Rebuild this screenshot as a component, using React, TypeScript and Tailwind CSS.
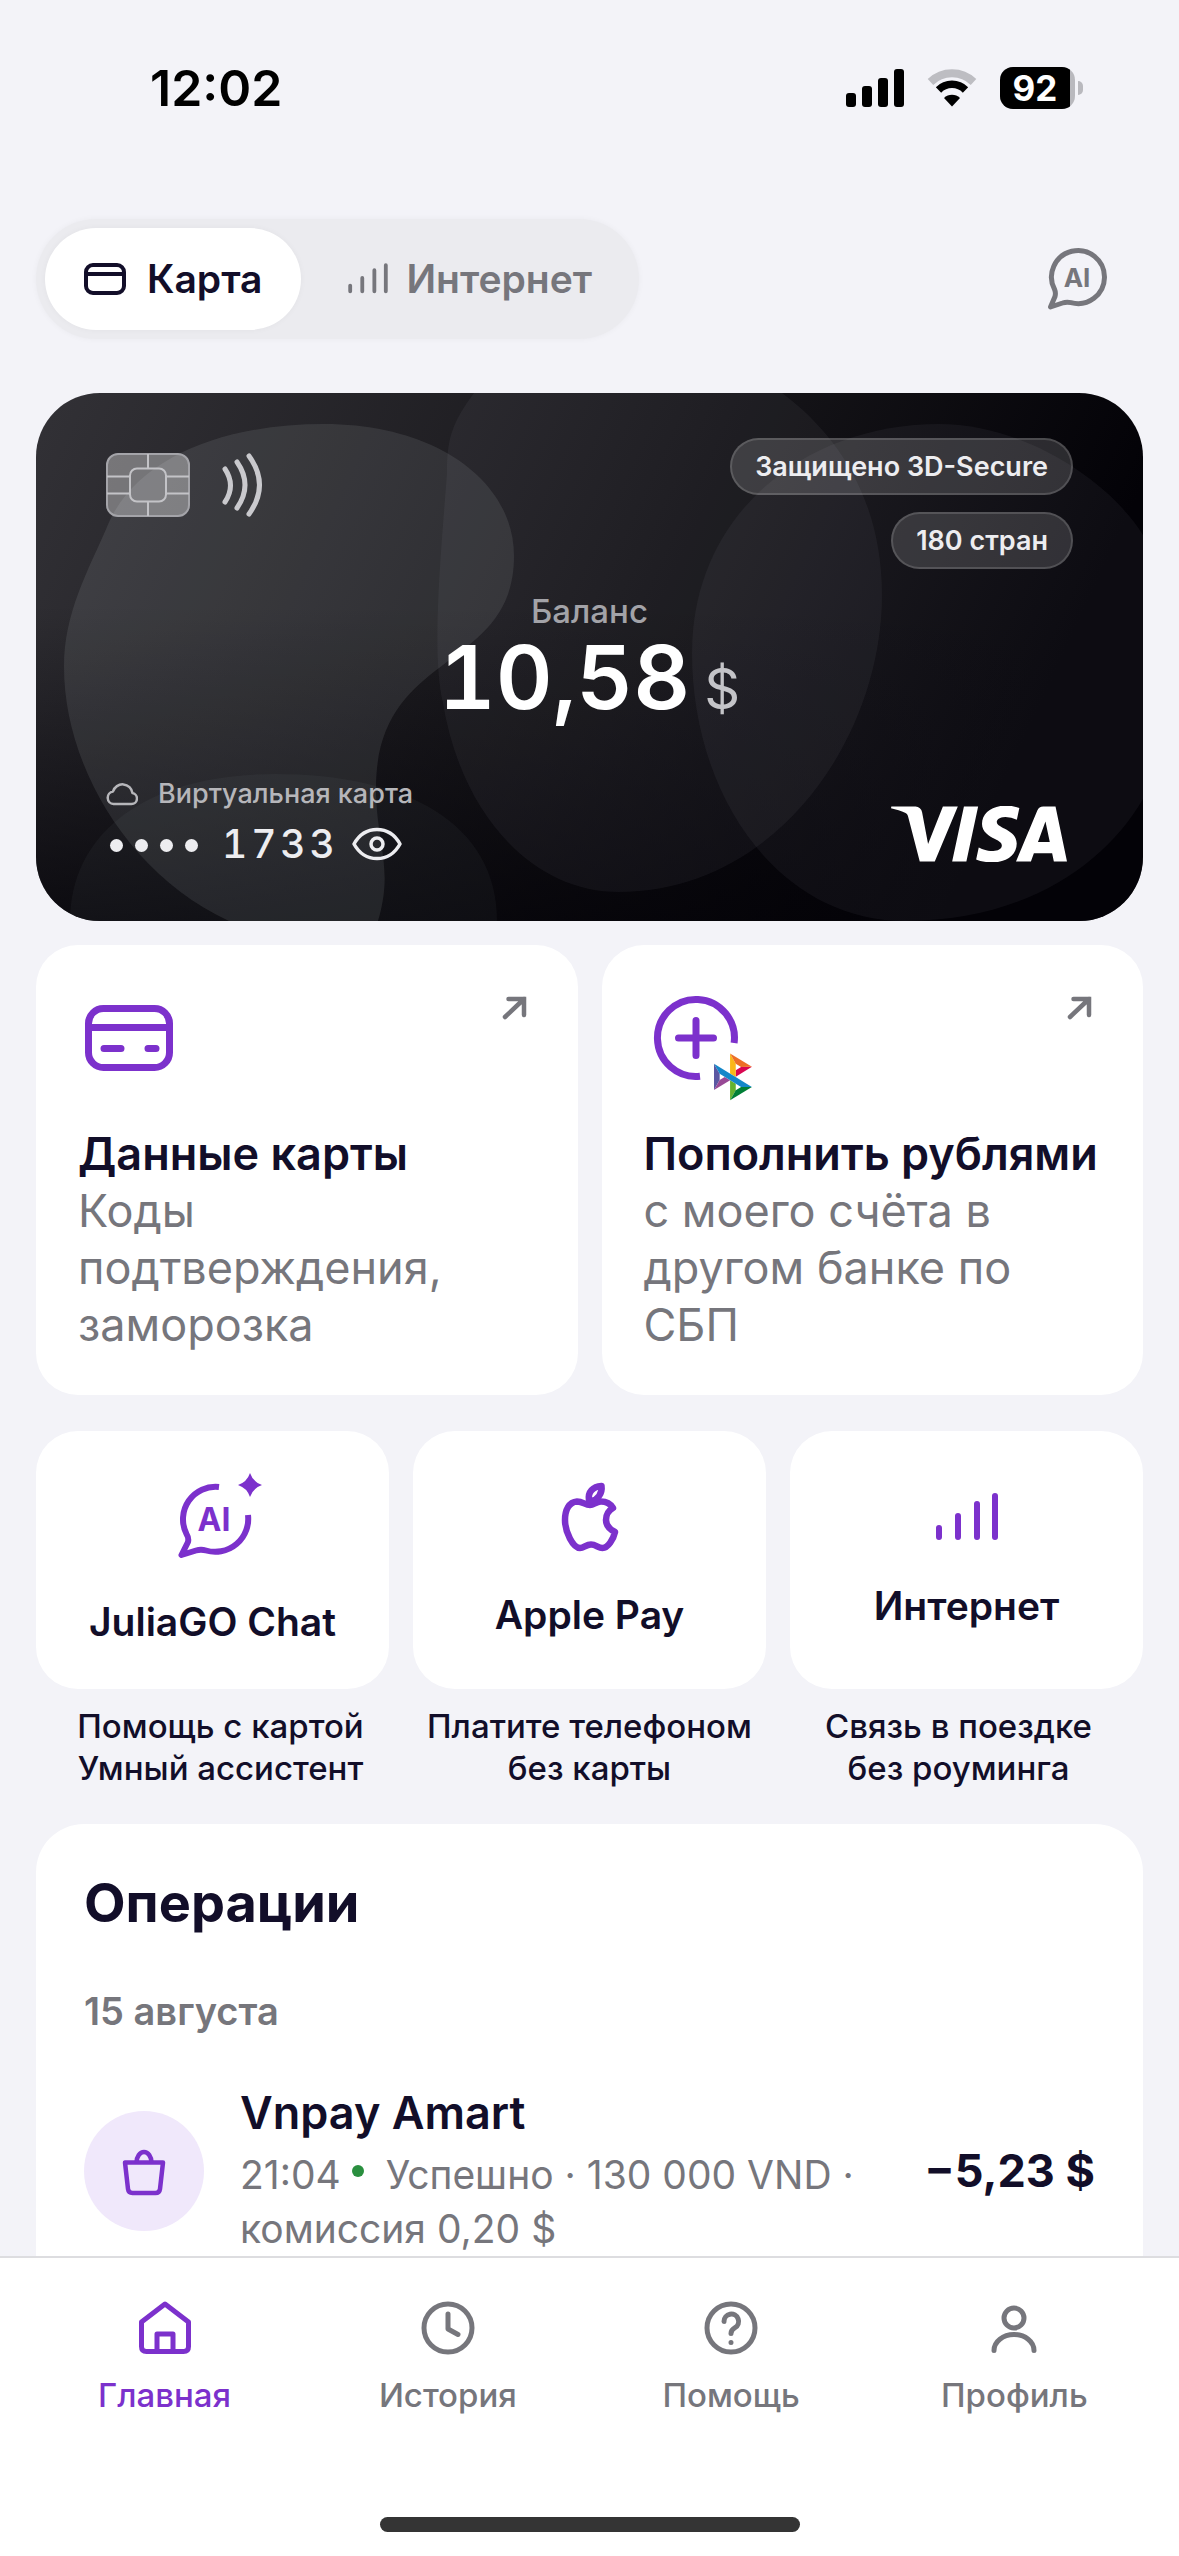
import { useState, type ReactNode } from "react";
import { SiVisa } from "react-icons/si";

function StatusBar() {
  return (
    <header className="flex h-[219px] items-start justify-between pt-[58px] pr-[96px] pl-[150px] text-black">
      <time className="text-[50px] leading-[60px] font-semibold">12:02</time>
      <div className="flex h-[60px] items-center gap-[23px]">
        <svg width="58" height="38" viewBox="0 0 58 38" fill="currentColor" aria-hidden="true">
          <rect x="0" y="24" width="10" height="14" rx="3" />
          <rect x="16" y="17" width="10" height="21" rx="3" />
          <rect x="32" y="9" width="10" height="29" rx="3" />
          <rect x="48" y="0" width="10" height="38" rx="3" />
        </svg>
        <svg width="50" height="38" viewBox="0 0 50 38" fill="none" aria-hidden="true">
          <path d="M3.5 13a31 31 0 0 1 43 0" stroke="#bdbdc2" strokeWidth="8" />
          <path d="M11.5 21a19 19 0 0 1 27 0" stroke="currentColor" strokeWidth="7.5" />
          <path d="M25 37.500l-8-8.500a11.500 11.500 0 0 1 16 0z" fill="currentColor" />
        </svg>
        <div className="flex items-center gap-[3px]">
          <div className="h-[42px] w-[75px] overflow-hidden rounded-[13px] bg-[#b9b9be]">
            <div className="flex h-full w-[70px] items-center justify-center bg-black text-[35px] leading-none font-bold text-white">
              92
            </div>
          </div>
          <div className="h-[14px] w-[5px] rounded-r-full bg-[#b9b9be]" />
        </div>
      </div>
    </header>
  );
}

function CardGlyph() {
  return (
    <svg width="44" height="36" viewBox="0 0 44 36" fill="none" stroke="currentColor" strokeWidth="4" aria-hidden="true">
      <rect x="3" y="4" width="38" height="28" rx="7" />
      <path d="M3 13h38" />
    </svg>
  );
}

function Bars({ width, stroke }: { width: number; stroke: number }) {
  return (
    <svg
      width={width}
      viewBox="0 0 66 52"
      fill="none"
      stroke="currentColor"
      strokeWidth={stroke}
      strokeLinecap="round"
      aria-hidden="true"
    >
      <path d="M5 37v9M24 25v21M43 13v33M61 5v41" />
    </svg>
  );
}

function TopTabs() {
  const [tab, setTab] = useState<"card" | "net">("card");
  const base = "flex h-[102px] items-center rounded-full px-[38px] text-[39px] font-semibold";
  const on = `${base} bg-white text-[#120e29] shadow-[0_0_6px_rgba(0,0,0,0.04)]`;
  const off = `${base} text-[#76767c]`;

  return (
    <div className="flex items-center justify-between px-[36px]">
      <div className="flex gap-[8px] rounded-full bg-[#ebebef] p-[9px] shadow-[0_0_6px_rgba(0,0,0,0.04)]">
        <button className={`${tab === "card" ? on : off} gap-[20px]`} onClick={() => setTab("card")}>
          <CardGlyph />
          Карта
        </button>
        <button className={`${tab === "net" ? on : off} gap-[18px]`} onClick={() => setTab("net")}>
          <Bars width={42} stroke={6} />
          Интернет
        </button>
      </div>
      <button className="mr-[32px] text-[#76767c]" aria-label="AI чат">
        <svg width="66" height="66" viewBox="0 0 66 66" fill="none" aria-hidden="true">
          <path
            d="M9.600 43.500A26.500 26.500 0 1 1 26 56.600Q21.500 55.500 17.500 57L5.500 61L10 50.500Q11 47 9.600 43.500Z"
            stroke="currentColor"
            strokeWidth="5"
            strokeLinejoin="round"
          />
          <text x="32" y="41" textAnchor="middle" fontSize="26" fontWeight="700" fill="currentColor">
            AI
          </text>
        </svg>
      </button>
    </div>
  );
}

function CardBackdrop() {
  return (
    <svg
      className="absolute inset-0 h-full w-full"
      viewBox="0 0 1107 528"
      preserveAspectRatio="none"
      fill="#d4e0e6"
      aria-hidden="true"
    >
      <defs>
        <linearGradient id="shade" x1="0" y1="0" x2="0" y2="1">
          <stop offset="0.4" stopColor="#030207" stopOpacity="0" />
          <stop offset="1" stopColor="#030207" stopOpacity="0.75" />
        </linearGradient>
      </defs>
      <rect width="1107" height="528" fill="url(#shade)" />
      <path
        fillOpacity="0.1"
        d="M28 274C28 220 52 178 71 134C98 66 186 31 288 31C400 31 478 88 478 163C478 280 340 255 340 395C340 450 358 475 342 528H193C90 480 28 370 28 274Z"
      />
      <path
        fillOpacity="0.05"
        d="M438 0C416 30 411 45 411 80C405 160 395 260 407 310C425 420 495 499 583 499C740 499 846 345 846 202C846 105 800 40 746 0Z"
      />
      <path
        fillOpacity="0.05"
        d="M656 260C656 120 770 31 903 31C990 31 1075 90 1107 142V406C1070 470 990 528 870 528C740 528 656 400 656 260Z"
      />
      <path fillOpacity="0.04" d="M34 528C34 440 110 381 239 381C370 381 461 430 461 528Z" />
    </svg>
  );
}

function Chip() {
  return (
    <svg width="84" height="64" viewBox="0 0 84 64" fill="none" stroke="#c3c3c7" strokeWidth="2" aria-hidden="true">
      <rect x="1" y="1" width="82" height="62" rx="11" fill="#ffffff" fillOpacity="0.35" stroke="#a4a4a9" />
      <path d="M42 1v15M42 48v15M1 23.500h23M60 23.500h23M1 40.500h23M60 40.500h23" />
      <rect x="24" y="15.500" width="36" height="33" rx="7" />
    </svg>
  );
}

function BankCard() {
  const [visible, setVisible] = useState(true);
  const pill =
    "rounded-full border-2 border-white/15 bg-white/15 px-[23px] text-[27px] leading-[53px] font-semibold text-[#ededf0]";

  return (
    <section className="relative mx-[36px] mt-[54px] overflow-hidden rounded-[64px] bg-linear-[115deg] from-[#323136] via-[#17161a] via-50% to-[#030207] to-85% px-[70px] pt-[45px] pb-[54px]">
      <CardBackdrop />
      <div className="relative flex items-start justify-between">
        <div className="flex items-center gap-[31px] pt-[14px]">
          <Chip />
          <svg width="42" height="66" viewBox="0 0 42 66" fill="none" stroke="#c9c9cd" strokeWidth="5" strokeLinecap="round" aria-hidden="true">
            <path d="M4 17q11 16.500 0 33M16 10q16 23 0 46M28 4q21 29 0 58" />
          </svg>
        </div>
        <div className="flex flex-col items-end gap-[17px]">
          <span className={pill}>Защищено 3D-Secure</span>
          <span className={pill}>180 стран</span>
        </div>
      </div>
      <div className="relative mt-[22px] flex flex-col items-center">
        <p className="text-[33px] leading-[40px] font-medium text-[#a3a3a8]">Баланс</p>
        <p className="flex items-baseline gap-[14px] leading-[92px] text-white tabular-nums">
          <span className="text-[88px] font-semibold">10,58</span>
          <span className="text-[56px] text-[#c4c4c8]">$</span>
        </p>
      </div>
      <div className="relative mt-[42px] flex items-end justify-between">
        <div>
          <p className="flex items-center gap-[20px] text-[27px] leading-[34px] font-medium text-[#b6b6ba]">
            <svg width="32" height="24" viewBox="0 0 32 24" fill="none" stroke="currentColor" strokeWidth="2.500" aria-hidden="true">
              <path d="M7.500 22h18a5.500 5.500 0 0 0 1-10.900A10 10 0 0 0 7 9.500A6.300 6.300 0 0 0 7.500 22z" strokeLinejoin="round" />
            </svg>
            Виртуальная карта
          </p>
          <div className="mt-[10px] flex items-center text-[#ededf0]">
            <span className="flex gap-[12px] px-[4px] pt-[3px]" aria-hidden="true">
              {[0, 1, 2, 3].map((i) => (
                <span key={i} className="size-[13px] rounded-full bg-[#ededf0]" />
              ))}
            </span>
            <span className="ml-[20px] text-[39px] leading-[46px] font-medium tracking-widest tabular-nums">
              {visible ? "1733" : "••••"}
            </span>
            <button className="ml-[12px]" aria-label="Показать номер" onClick={() => setVisible(!visible)}>
              <svg width="52" height="36" viewBox="0 0 52 36" fill="none" stroke="currentColor" strokeWidth="3.500" aria-hidden="true">
                <path d="M3 18C8 9 16 3.500 26 3.500S44 9 49 18C44 27 36 32.500 26 32.500S8 27 3 18z" strokeLinejoin="round" />
                <circle cx="26" cy="18" r="6" />
              </svg>
            </button>
          </div>
        </div>
        <SiVisa width="176" height="56" viewBox="0 8.200 24 7.600" className="mr-[6px] mb-[5px] h-[56px] w-[176px] text-white" title="VISA" />
      </div>
    </section>
  );
}

function ArrowUpRight() {
  return (
    <svg width="42" height="42" viewBox="0 0 42 42" fill="none" stroke="#76767c" strokeWidth="4.500" strokeLinecap="round" aria-hidden="true">
      <path d="M11 30L30 12M14.500 12H30v16" />
    </svg>
  );
}

function ActionCard({ icon, title, text }: { icon: ReactNode; title: string; text: string }) {
  return (
    <button className="rounded-[42px] bg-white p-[42px] text-left text-[45px] leading-[57px]">
      <span className="flex items-start justify-between">
        {icon}
        <ArrowUpRight />
      </span>
      <span className="mt-[36px] block font-semibold whitespace-nowrap text-[#120e29]">{title}</span>
      <span className="block pr-[40px] text-[#76767c]">{text}</span>
    </button>
  );
}

function CardDetailsIcon() {
  return (
    <svg width="102" height="102" viewBox="0 0 102 102" fill="none" stroke="#7c31cc" strokeWidth="7" aria-hidden="true">
      <rect x="10.500" y="21.500" width="81" height="59" rx="15" />
      <path d="M10 40.500h82" />
      <path d="M26 61.500h17M70 61.500h8" strokeLinecap="round" />
    </svg>
  );
}

function TopUpIcon() {
  return (
    <svg width="112" height="102" viewBox="0 0 112 102" className="overflow-visible" fill="none" aria-hidden="true">
      <g stroke="#7c31cc" strokeWidth="7">
        <path d="M90.100 56A38.500 38.500 0 1 0 56 89.200" />
        <path d="M52 33.500v35M34.500 51h35" strokeLinecap="round" />
      </g>
      <g transform="translate(70 66.500) scale(0.390)">
        <path d="M0 26.120l14.532 25.975v15.844L.017 93.863z" fill="#5b57a2" />
        <path d="M55.797 42.643l13.617-8.346 27.868-.026-41.485 25.414z" fill="#d90751" />
        <path d="M55.720 25.967l.077 34.390-14.566-8.950V0z" fill="#fab718" />
        <path d="M97.282 34.271l-27.869.026-13.693-8.330L41.231 0z" fill="#ed6f26" />
        <path d="M55.797 94.007V77.322l-14.566-8.780.008 51.458z" fill="#63b22f" />
        <path d="M.017 93.863l41.333-25.320-13.896-8.526-12.922 7.922z" fill="#984995" />
        <path d="M69.380 85.737L14.531 52.095 0 26.120l97.223 59.583z" fill="#1487c9" />
        <path d="M41.240 120l14.556-25.993 13.583-8.270 27.843-.034z" fill="#017f36" />
      </g>
    </svg>
  );
}

function AiSparkIcon() {
  return (
    <svg width="84" height="84" viewBox="0 0 84 84" className="overflow-visible" fill="none" aria-hidden="true">
      <path
        d="M48 12A32.500 32.500 0 0 0 15.500 59Q18 63 17 67L10.500 80L25 75.500Q30 74 35 75.500A33 33 0 0 0 77 40"
        stroke="currentColor"
        strokeWidth="6"
        strokeLinejoin="round"
      />
      <path d="M79-2q3 9 12 12q-9 3-12 12q-3-9-12-12q9-3 12-12z" fill="currentColor" />
      <text x="43" y="56" textAnchor="middle" fontSize="32" fontWeight="700" fill="currentColor">
        AI
      </text>
    </svg>
  );
}

function AppleIcon() {
  return (
    <svg width="60" height="70" viewBox="0 0 60 70" fill="none" stroke="currentColor" strokeWidth="6.500" strokeLinejoin="round" aria-hidden="true">
      <path d="M30 23C25 23 23 19.500 17 19.500C9 20 5 28 5 38C5 50 13 66 20 66C24 66 26 62.500 31 62.500C36 62.500 38 66 42.500 66C48 66 53.500 57 55 50C49 47 46 43 46 38C46 32 48.500 28.500 53 26C50 21 46 19.500 41 19.500C36 19.500 34 23 30 23Z" />
      <path d="M29 18.500C27.500 10 33 4.500 41.500 4C42.500 11 38 18 31 19Z" />
    </svg>
  );
}

function Tile({ icon, label }: { icon: ReactNode; label: string }) {
  return (
    <button className="flex h-[258px] flex-col items-center justify-center gap-[40px] rounded-[42px] bg-white text-[#7c31cc]">
      {icon}
      <span className="text-[39px] leading-[46px] font-semibold text-[#120e29]">{label}</span>
    </button>
  );
}

const CAPTIONS = [
  ["Помощь с картой", "Умный ассистент"],
  ["Платите телефоном", "без карты"],
  ["Связь в поездке", "без роуминга"],
];

function Tiles() {
  return (
    <section className="mx-[36px] mt-[36px]">
      <div className="grid grid-cols-3 gap-[24px]">
        <Tile icon={<AiSparkIcon />} label="JuliaGO Chat" />
        <Tile icon={<AppleIcon />} label="Apple Pay" />
        <Tile icon={<Bars width={66} stroke={6} />} label="Интернет" />
      </div>
      <div className="mt-[16px] grid grid-cols-3 text-center text-[33px] leading-[42px] font-medium text-[#120e29]">
        {CAPTIONS.map(([first, second]) => (
          <p key={first} className="whitespace-nowrap">
            {first}
            <br />
            {second}
          </p>
        ))}
      </div>
    </section>
  );
}

function Operations() {
  return (
    <section className="mx-[36px] mt-[35px] rounded-[48px] bg-white px-[48px] pt-[46px] pb-[48px]">
      <h2 className="text-[54px] leading-[66px] font-bold text-[#120e29]">Операции</h2>
      <h3 className="mt-[52px] text-[38px] leading-[46px] font-semibold text-[#76767c]">15 августа</h3>
      <article className="mt-[51px] flex items-center">
        <span className="flex size-[120px] shrink-0 items-center justify-center rounded-full bg-[#f0e8fb]">
          <svg width="48" height="52" viewBox="0 0 48 52" fill="none" stroke="#7c31cc" strokeWidth="4.500" strokeLinejoin="round" aria-hidden="true">
            <path d="M5 17.500h38l-3 26.500q-.500 4-4.500 4h-23q-4 0-4.500-4z" />
            <path d="M16.500 17.500a7.500 10.500 0 0 1 15 0" />
          </svg>
        </span>
        <div className="ml-[36px] flex-1">
          <h4 className="text-[45px] leading-[56px] font-semibold text-[#120e29]">Vnpay Amart</h4>
          <p className="mt-[7px] text-[39px] leading-[54px] text-[#76767c]">
            21:04
            <span className="mx-[11px] inline-block size-[12px] -translate-y-[12px] rounded-full bg-[#2a8f3f]" />
            {" Успешно · 130 000 VND · комиссия 0,20 $"}
          </p>
        </div>
        <strong className="text-[45px] leading-[56px] font-bold whitespace-nowrap text-[#120e29]">−5,23 $</strong>
      </article>
    </section>
  );
}

const NAV = [
  {
    label: "Главная",
    icon: <path d="M5.500 23L29 5L52.500 23V47.500q0 5-5 5h-37q-5 0-5-5zM21 52V35h16v17" />,
  },
  {
    label: "История",
    icon: (
      <>
        <circle cx="29" cy="29" r="24" />
        <path d="M29 15v15l10 5.500" />
      </>
    ),
  },
  {
    label: "Помощь",
    icon: (
      <>
        <circle cx="29" cy="29" r="24" />
        <path d="M22 22.500a7.300 7.300 0 1 1 11 6.200Q29 31 29 34.500M29 43.500h.010" />
      </>
    ),
  },
  {
    label: "Профиль",
    icon: (
      <>
        <circle cx="29" cy="19" r="10" />
        <path d="M9 51.500a20 16 0 0 1 40 0" />
      </>
    ),
  },
];

function BottomNav() {
  return (
    <nav className="relative shrink-0 border-t-2 border-[#dddde0] bg-white">
      <div className="grid grid-cols-4 px-[23px] pt-[41px]">
        {NAV.map(({ label, icon }, i) => (
          <a
            key={label}
            href="#"
            className={`flex flex-col items-center gap-[18px] text-[33px] leading-[40px] font-medium ${
              i === 0 ? "text-[#7c31cc]" : "text-[#76767c]"
            }`}
          >
            <svg
              width="58"
              height="58"
              viewBox="0 0 58 58"
              fill="none"
              stroke="currentColor"
              strokeWidth="5"
              strokeLinecap="round"
              strokeLinejoin="round"
              aria-hidden="true"
            >
              {icon}
            </svg>
            {label}
          </a>
        ))}
      </div>
      <div className="mx-auto mt-[102px] mb-[24px] h-[15px] w-[420px] rounded-full bg-[#343434]" />
    </nav>
  );
}

export default function App() {
  return (
    <div className="flex h-screen flex-col bg-[#f3f3f8] font-['Inter','Noto_Sans',sans-serif]">
      <main className="min-h-0 flex-1 overflow-hidden">
        <StatusBar />
        <TopTabs />
        <BankCard />
        <div className="mx-[36px] mt-[24px] grid grid-cols-2 gap-[24px]">
          <ActionCard icon={<CardDetailsIcon />} title="Данные карты" text="Коды подтверждения, заморозка" />
          <ActionCard icon={<TopUpIcon />} title="Пополнить рублями" text="с моего счёта в другом банке по СБП" />
        </div>
        <Tiles />
        <Operations />
      </main>
      <BottomNav />
    </div>
  );
}
